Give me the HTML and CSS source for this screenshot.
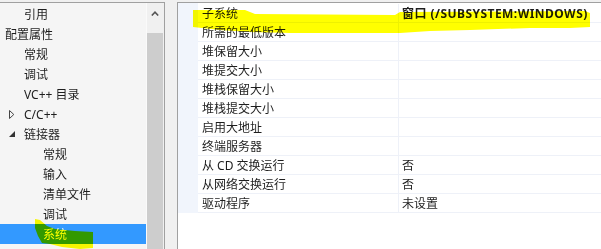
FILE: index.html
```html
<!DOCTYPE html>
<html>
<head>
    <meta charset="utf-8">
    <link rel="stylesheet" href="styles.css">
</head>
<body>
    <div class="layout">
        <div class="tree-pane">
            <div class="tree">
                <div class="tree-row l1"><span class="twisty"></span>引用</div>
                <div class="tree-row l0">配置属性</div>
                <div class="tree-row l1"><span class="twisty"></span>常规</div>
                <div class="tree-row l1"><span class="twisty"></span>调试</div>
                <div class="tree-row l1"><span class="twisty"></span>VC++ 目录</div>
                <div class="tree-row l1">
                    <span class="twisty"><svg width="6" height="9" viewBox="0 0 6 9"><path d="M0.5 0.5 L4.8 4.5 L0.5 8.5 Z" fill="none" stroke="#444" stroke-width="1"/></svg></span>C/C++
                </div>
                <div class="tree-row l1">
                    <span class="twisty"><svg width="6" height="6" viewBox="0 0 6 6"><path d="M6 0 L6 6 L0 6 Z" fill="#333"/></svg></span>链接器
                </div>
                <div class="tree-row l2"><span class="twisty"></span>常规</div>
                <div class="tree-row l2"><span class="twisty"></span>输入</div>
                <div class="tree-row l2"><span class="twisty"></span>清单文件</div>
                <div class="tree-row l2"><span class="twisty"></span>调试</div>
                <div class="tree-row l2 selected"><span class="twisty"></span>系统</div>
            </div>
            <div class="scrollbar">
                <div class="scroll-up">
                    <svg width="8" height="5" viewBox="0 0 8 5"><path d="M0.8 4.5 L4 1.2 L7.2 4.5" fill="none" stroke="#555" stroke-width="1.6"/></svg>
                </div>
                <div class="scroll-thumb"></div>
            </div>
        </div>

        <div class="props-pane">
            <div class="props">
                <div class="prop-row"><span class="gutter"></span><span class="name">子系统</span><span class="value bold">窗口 (/SUBSYSTEM:WINDOWS)</span></div>
                <div class="prop-row"><span class="gutter"></span><span class="name">所需的最低版本</span><span class="value"></span></div>
                <div class="prop-row"><span class="gutter"></span><span class="name">堆保留大小</span><span class="value"></span></div>
                <div class="prop-row"><span class="gutter"></span><span class="name">堆提交大小</span><span class="value"></span></div>
                <div class="prop-row"><span class="gutter"></span><span class="name">堆栈保留大小</span><span class="value"></span></div>
                <div class="prop-row"><span class="gutter"></span><span class="name">堆栈提交大小</span><span class="value"></span></div>
                <div class="prop-row"><span class="gutter"></span><span class="name">启用大地址</span><span class="value"></span></div>
                <div class="prop-row"><span class="gutter"></span><span class="name">终端服务器</span><span class="value"></span></div>
                <div class="prop-row"><span class="gutter"></span><span class="name">从 CD 交换运行</span><span class="value">否</span></div>
                <div class="prop-row"><span class="gutter"></span><span class="name">从网络交换运行</span><span class="value">否</span></div>
                <div class="prop-row"><span class="gutter"></span><span class="name">驱动程序</span><span class="value">未设置</span></div>
            </div>
        </div>
    </div>

    <!-- marker strokes drawn over the screenshot -->
    <svg class="marker" width="601" height="249" viewBox="0 0 601 249">
        <polygon points="193,10 245,10 255,14 395,15 400,12 585,11 590,13 590,27 570,28 530,28 470,30 430,31 400,33 290,33 250,32 220,30 193,27"/>
        <polygon points="35,219 40,220 47,226 55,229 75,231 93,232 93,248 80,249 62,247 50,244 42,243 38,236 35,228"/>
    </svg>
</body>
</html>
```

FILE: styles.css
```css
:root {
    --frame-bg: #f0f0f0;
    --tree-bg: #f5f5f5;
    --border: #a0a0a0;
    --text: #1e1e1e;
    --select: #3399ff;
    --gutter: #f1f5fc;
    --grid-line: #eef1f8;
}

html, body {
    margin: 0;
    height: 100%;
    overflow: hidden;
}

body {
    background: var(--frame-bg);
    font-family: "Noto Sans", "Noto Sans CJK SC", sans-serif;
    font-size: 12px;
    color: var(--text);
    position: relative;
}

.layout {
    display: flex;
    gap: 12px;
    padding-top: 2px;
    height: 247px;
}

/* left tree */
.tree-pane {
    display: flex;
    width: 164px;
    background: var(--tree-bg);
    border-top: 1px solid var(--border);
    border-right: 1px solid var(--border);
}

.tree {
    width: 146px;
    padding-top: 1px;
}

.tree-row {
    display: flex;
    align-items: center;
    height: 20px;
    white-space: nowrap;
}

.tree-row.l0 {
    padding-left: 5px;
}

.tree-row.l1 {
    padding-left: 5px;
}

.tree-row.l2 {
    padding-left: 24px;
}

.twisty {
    display: flex;
    align-items: center;
    width: 19px;
    height: 20px;
    padding-left: 4px;
    box-sizing: border-box;
}

.tree-row.selected {
    background: var(--select);
    color: #ffffff;
}

.scrollbar {
    width: 17px;
    border-left: 1px solid #fafafa;
    background: var(--frame-bg);
    display: flex;
    flex-direction: column;
}

.scroll-up {
    height: 21px;
    display: flex;
    justify-content: center;
    align-items: center;
    padding-right: 2px;
}

.scroll-thumb {
    flex: 1;
    margin-top: 9px;
    margin-right: 1px;
    background: #cdcdcd;
}

/* right property grid */
.props-pane {
    flex: 1;
    background: #ffffff;
    border-top: 1px solid var(--border);
    border-left: 1px solid var(--border);
}

.props {
    display: flex;
    flex-direction: column;
    padding-top: 1px;
    background: linear-gradient(var(--gutter), var(--gutter)) no-repeat 0 0 / 20px 1px;
}

.prop-row {
    display: flex;
    height: 19px;
    white-space: nowrap;
}

.prop-row .gutter {
    width: 20px;
    background: var(--gutter);
}

.prop-row .name,
.prop-row .value {
    display: flex;
    align-items: center;
    border-bottom: 1px solid var(--grid-line);
}

.prop-row .name {
    width: 196px;
    padding-left: 4px;
    border-right: 1px solid var(--grid-line);
}

.prop-row .value {
    flex: 1;
    padding-left: 3px;
}

.value.bold {
    font-weight: 700;
    letter-spacing: 0.45px;
}

.marker {
    position: absolute;
    left: 0;
    top: 0;
    pointer-events: none;
    mix-blend-mode: multiply;
    fill: #ffff00;
}
```
